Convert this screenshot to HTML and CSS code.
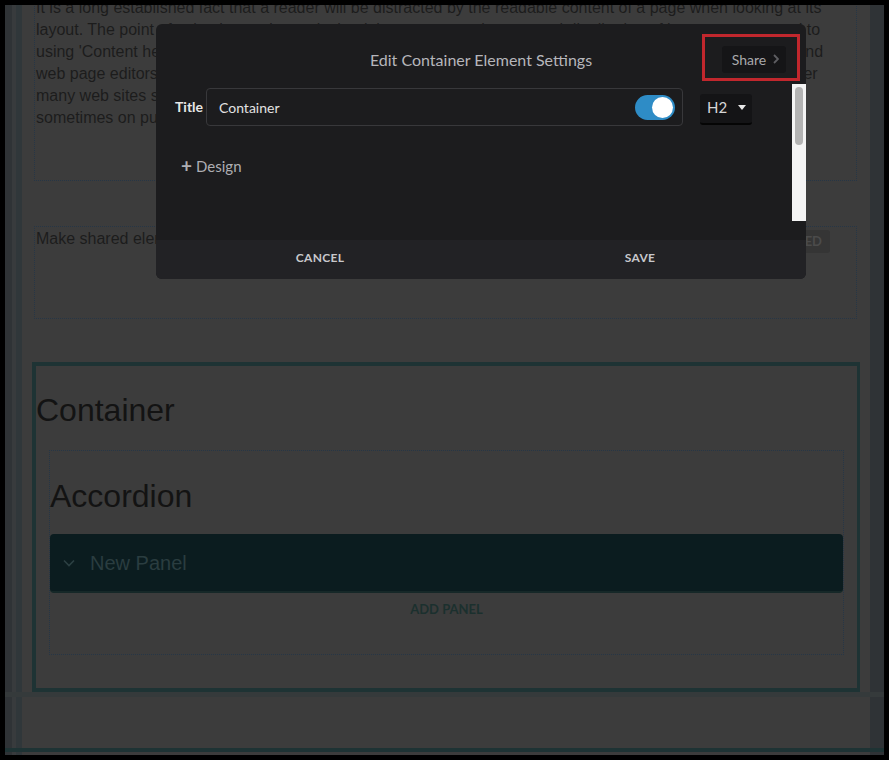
FILE: index.html
```html
<!DOCTYPE html>
<html lang="en">
<head>
    <meta charset="utf-8">
    <title>Edit Container Element Settings</title>
    <link rel="stylesheet" href="styles.css">
</head>
<body>

    <div class="viewport">
        <div class="page">
            <div class="block text-block">
                <p>It is a long established fact that a reader will be distracted by the readable content of a page when looking at its layout. The point of using Lorem Ipsum is that it has a more-or-less normal distribution of letters, as opposed to using 'Content here, content here', making it look like readable English. Many desktop publishing packages and web page editors now use Lorem Ipsum as their default model text, and a search for 'lorem ipsum' will uncover many web sites still in their infancy. Various versions have evolved over the years, sometimes by accident, sometimes on purpose (injected humour and the like).</p>
            </div>

            <div class="block shared-block">
                <span class="shared-text">Make shared elements reusable on every page of the site</span>
                <span class="badge">SHARED</span>
            </div>

            <div class="container-el">
                <h1 class="el-title">Container</h1>
                <div class="block accordion-block">
                    <h1 class="el-title">Accordion</h1>
                    <div class="panel">
                        <svg class="chev" width="12" height="8" viewBox="0 0 12 8"><polyline points="1,1.5 6,6.5 11,1.5" fill="none" stroke="#2c4043" stroke-width="1.6"/></svg>
                        <span>New Panel</span>
                    </div>
                    <div class="add-panel">ADD PANEL</div>
                </div>
            </div>
        </div>
        <div class="bottom-strip"></div>

        <!-- 설정 다이얼로그 -->
        <div class="dialog">
            <div class="dialog-header">
                <span></span>
                <div class="dialog-title">Edit Container Element Settings</div>
                <button class="share-btn">Share
                    <svg width="6" height="10" viewBox="0 0 6 10"><polyline points="1,1 5,5 1,9" fill="none" stroke="#5e5e62" stroke-width="1.8"/></svg>
                </button>
            </div>

            <div class="dialog-body">
                <div class="dialog-scroll">
                    <div class="title-row">
                        <label class="field-label">Title</label>
                        <div class="title-input">
                            <span>Container</span>
                            <span class="toggle"><span class="knob"></span></span>
                        </div>
                        <div class="select">H2 <span class="caret"></span></div>
                    </div>
                    <div class="design-row"><span class="plus">+</span>Design</div>
                </div>
                <div class="scrollbar"><div class="thumb"></div></div>
            </div>

            <div class="dialog-footer">
                <button class="footer-btn">CANCEL</button>
                <button class="footer-btn">SAVE</button>
            </div>

            <div class="highlight"></div>
        </div>
    </div>

</body>
</html>
```

FILE: styles.css
```css
/* 기본 */
body {
    margin: 0;
    padding: 5px;
    background: #000;
    font-family: "Liberation Sans", Arial, sans-serif;
}

.viewport {
    position: relative;
    height: 750px;
    overflow: hidden;
    background: linear-gradient(to right,
        #2f3336 0 7px,
        #383b3d 7px 11px,
        #30373a 11px 17px,
        #3c3c3c 17px calc(100% - 14px),
        #2f3336 calc(100% - 14px));
}

.page {
    padding: 0 24px 0 27px;
}

/* 페이지 요소 */
.block {
    border: 1px dotted #263646;
    margin: 0 3px 0 2px;
}

.text-block {
    margin-top: -10px;
    padding: 1px 10px 51px 1px;
}

.text-block p {
    margin: 0;
    font-size: 16px;
    line-height: 22px;
    color: #1c1c1c;
}

.shared-block {
    margin-top: 45px;
    height: 93px;
    box-sizing: border-box;
    padding: 2px 26px 0 1px;
    display: flex;
    justify-content: space-between;
    align-items: flex-start;
    overflow: hidden;
}

.shared-text {
    font-size: 16px;
    line-height: 20px;
    color: #1c1c1c;
    white-space: nowrap;
}

.badge {
    margin-top: 1px;
    padding: 0 8px;
    height: 23px;
    line-height: 23px;
    background: #353535;
    color: #4b4b4b;
    font-family: "Lato", sans-serif;
    font-weight: 700;
    font-size: 13px;
    border-radius: 3px;
}

.container-el {
    margin-top: 43px;
    border: 4px solid #1e3334;
    border-right-width: 3px;
    padding-bottom: 33px;
}

.el-title {
    margin: 26px 0 0;
    font-size: 32px;
    line-height: 37px;
    font-weight: normal;
    color: #131313;
}

.accordion-block {
    margin: 21px 13px 0 13px;
    padding-bottom: 37px;
}

.accordion-block .el-title {
    margin-top: 27px;
}

.panel {
    margin-top: 19px;
    height: 59px;
    box-sizing: border-box;
    padding: 1px 0 0 13px;
    background: #0b1c1f;
    border-radius: 4px;
    border-bottom: 2px solid #162828;
    display: flex;
    align-items: center;
    gap: 15px;
    font-size: 20px;
    color: #2a3d40;
}

.add-panel {
    margin-top: 8px;
    text-align: center;
    font-family: "Lato", sans-serif;
    font-weight: 700;
    font-size: 13px;
    line-height: 16px;
    color: #1b302e;
}

.bottom-strip {
    border-top: 5px solid #353a3b;
    height: 51px;
    border-bottom: 4px solid #1e3334;
}

/* 다이얼로그 */
.dialog {
    position: absolute;
    left: 151px;
    top: 19px;
    width: 650px;
    background: #1c1c1e;
    border-radius: 6px;
    overflow: hidden;
    font-family: "Lato", "Liberation Sans", sans-serif;
}

.dialog-header {
    height: 60px;
    box-sizing: border-box;
    padding: 10px 20px 0;
    display: grid;
    grid-template-columns: 1fr auto 1fr;
    align-items: center;
}

.dialog-title {
    font-size: 16px;
    color: #b6b6bb;
}

.share-btn {
    justify-self: end;
    width: 64px;
    height: 27px;
    border: none;
    border-radius: 3px;
    background: #151517;
    color: #a9a9ab;
    font-family: "Lato", sans-serif;
    font-size: 14px;
    display: flex;
    align-items: center;
    justify-content: center;
    gap: 7px;
    padding: 0 0 0 3px;
}

.dialog-body {
    display: flex;
    height: 137px;
    margin-bottom: 19px;
}

.dialog-scroll {
    flex: 1;
    padding: 4px 0 0 19px;
}

.title-row {
    display: flex;
    align-items: flex-start;
}

.field-label {
    width: 31px;
    line-height: 38px;
    font-weight: 700;
    font-size: 14px;
    color: #e6e6e6;
}

.title-input {
    width: 477px;
    height: 38px;
    box-sizing: border-box;
    border: 1px solid #38383b;
    border-radius: 4px;
    display: flex;
    align-items: center;
    justify-content: space-between;
    padding: 0 7px 0 12px;
    font-size: 14px;
    color: #e2e2e2;
}

.toggle {
    width: 40px;
    height: 25px;
    box-sizing: border-box;
    padding: 2px;
    border-radius: 13px;
    background: #2e8cc6;
    display: flex;
    justify-content: flex-end;
}

.knob {
    width: 21px;
    height: 21px;
    border-radius: 50%;
    background: #fff;
}

.select {
    margin: 6px 0 0 17px;
    width: 52px;
    height: 31px;
    box-sizing: border-box;
    padding: 0 6px 3px 7px;
    background: #141416;
    border-bottom: 2px solid #050505;
    border-radius: 3px;
    display: flex;
    align-items: center;
    justify-content: space-between;
    font-size: 15px;
    color: #d6d6d6;
}

.caret {
    border-left: 4px solid transparent;
    border-right: 4px solid transparent;
    border-top: 5px solid #e8e8e8;
}

.design-row {
    margin-top: 30px;
    padding-left: 6px;
    display: flex;
    align-items: center;
    gap: 4px;
    font-size: 15px;
    line-height: 20px;
    color: #aeaeb3;
}

.plus {
    font-size: 19px;
    font-weight: 700;
}

.scrollbar {
    width: 14px;
    padding: 3px;
    box-sizing: border-box;
    background: #f4f4f4;
}

.thumb {
    width: 8px;
    height: 58px;
    border-radius: 4px;
    background: #b3b3b3;
}

.dialog-footer {
    display: flex;
    height: 39px;
    background: #222225;
}

.footer-btn {
    flex: 1;
    border: none;
    background: none;
    padding: 0 0 4px;
    color: #c8c8cc;
    font-family: "Lato", sans-serif;
    font-weight: 700;
    font-size: 12px;
    letter-spacing: 0.3px;
}

.footer-btn:first-child {
    padding-left: 4px;
}

.footer-btn:last-child {
    padding-right: 6px;
}

/* 강조 표시 */
.highlight {
    position: absolute;
    left: 546px;
    top: 10px;
    width: 98px;
    height: 47px;
    box-sizing: border-box;
    border: 3px solid #c1272d;
}
```
